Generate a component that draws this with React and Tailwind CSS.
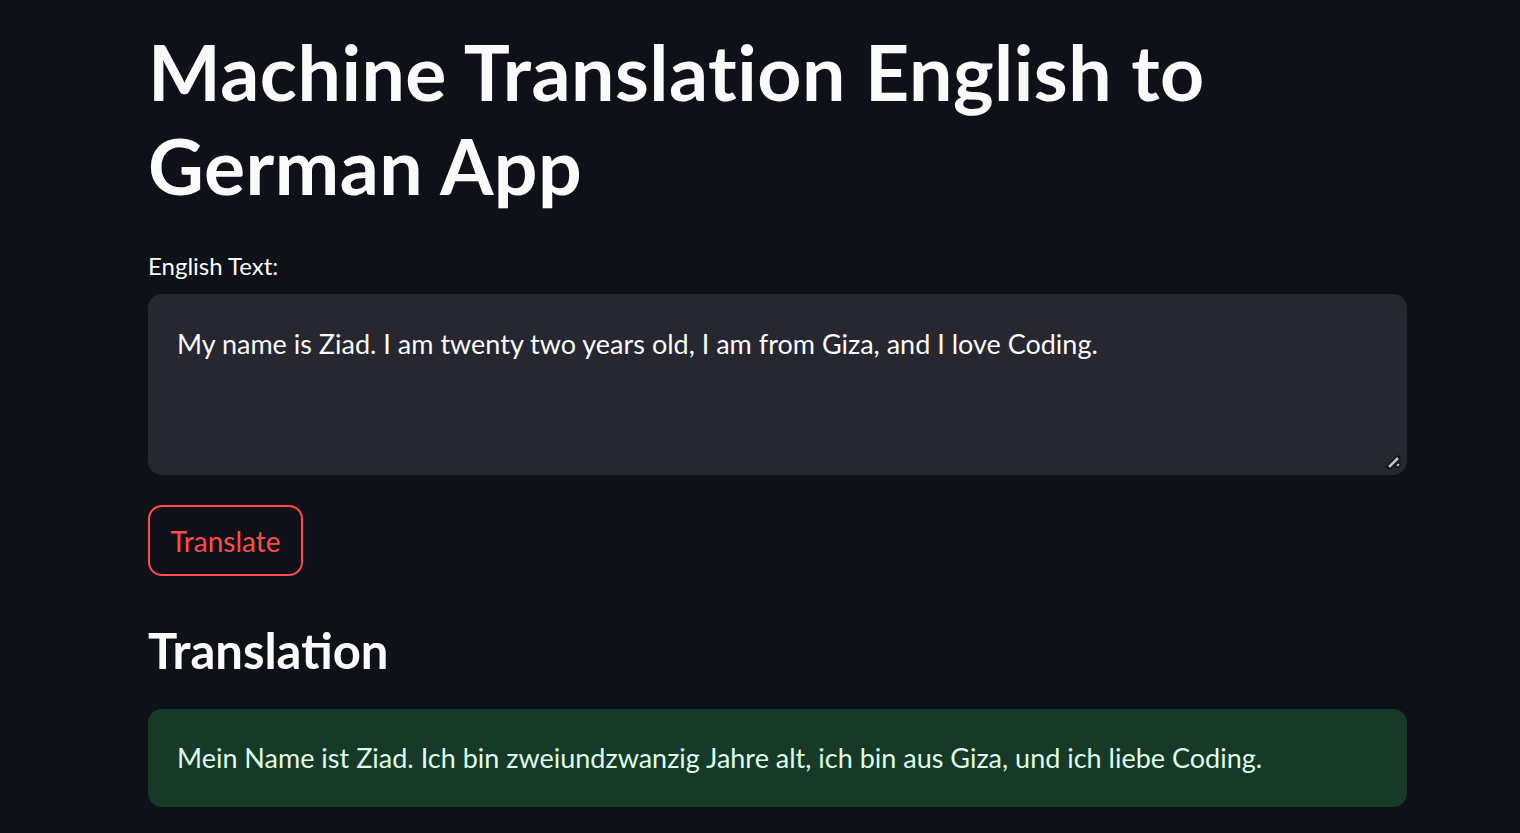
export default function App() {
  const font = { fontFamily: '"Lato", "Noto Sans", sans-serif' };
  return (
    <div className="min-h-[833px] w-full bg-[#0e1117] text-[#fafafa]" style={font}>
      <div className="ml-[148px] w-[1259px] pt-[24px] flex flex-col">
        <h1 className="text-[77px] leading-[94px] font-bold tracking-[0.5px]">
          Machine Translation English to German App
        </h1>
        <label className="mt-[39px] text-[24px] leading-[30px]">English Text:</label>
        <div className="relative mt-[13px] h-[181px] rounded-[14px] bg-[#262730]">
          <div className="pl-[29px] pt-[30px] text-[27px] leading-[40px]">
            My name is Ziad. I am twenty two years old, I am from Giza, and I love Coding.
          </div>
          <svg className="absolute right-[3px] bottom-[3px]" width="20" height="20" viewBox="0 0 20 20">
            <path d="M5 15 L14 6" stroke="#0e1117" strokeWidth="5" strokeLinecap="round" />
            <path d="M5 15 L14 6" stroke="#c4c4c8" strokeWidth="2.5" />
            <path d="M13 14 L15 12" stroke="#0e1117" strokeWidth="4" strokeLinecap="round" />
            <path d="M13 14 L15 12" stroke="#c4c4c8" strokeWidth="2" />
          </svg>
        </div>
        <div className="mt-[30px]">
          <button className="h-[71px] w-[155px] rounded-[14px] border-2 border-[#ff4b4b] text-[#ff4b4b] text-[28px] leading-[42px] bg-[#0e1117]">
            Translate
          </button>
        </div>
        <h3 className="mt-[44px] text-[49px] leading-[60px] font-bold">Translation</h3>
        <div className="mt-[29px] h-[98px] rounded-[14px] bg-[#173928] flex items-center pl-[29px] text-[27px] leading-[40px] text-[#dffde9]">
          Mein Name ist Ziad. Ich bin zweiundzwanzig Jahre alt, ich bin aus Giza, und ich liebe Coding.
        </div>
      </div>
    </div>
  );
}
